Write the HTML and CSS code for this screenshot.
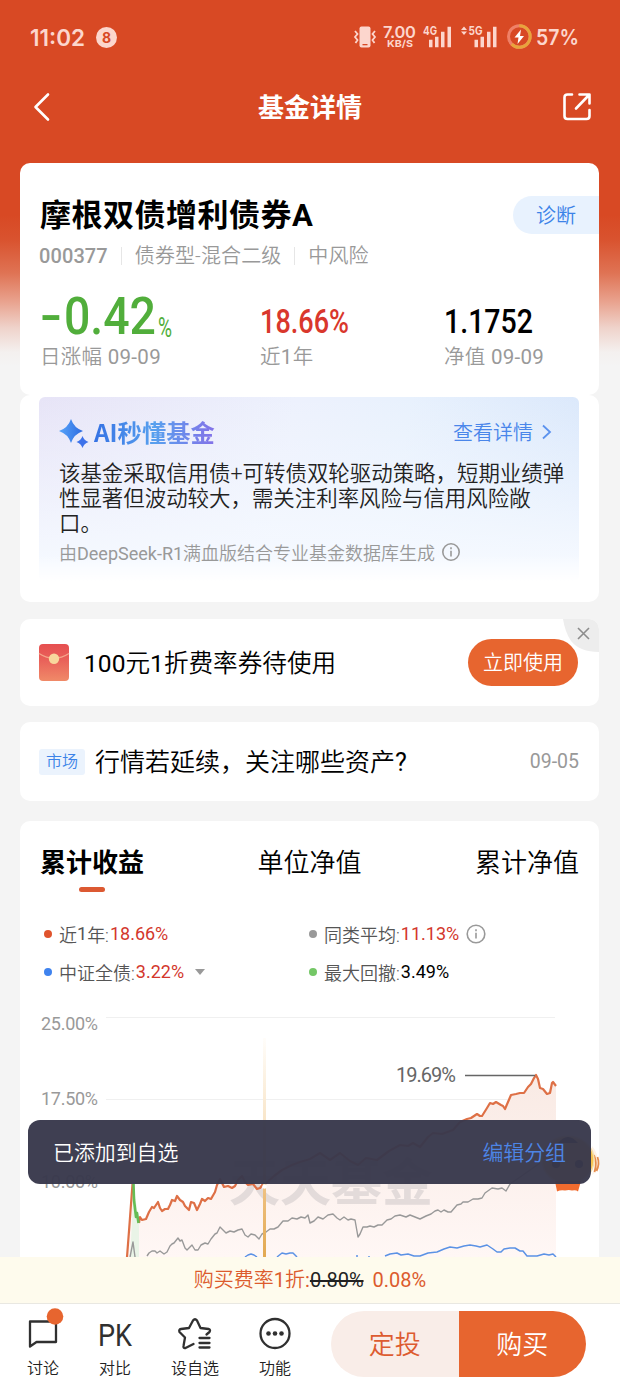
FILE: index.html
```html
<!DOCTYPE html>
<html lang="zh-CN">
<head>
<meta charset="utf-8">
<title>基金详情</title>
<link rel="stylesheet" href="styles.css">
</head>
<body>
<div class="screen">
  <header class="status">
    <span class="clock">11:02</span><span class="notice">8</span>
    <svg class="signals" width="236" height="36" viewBox="350 20 236 36">
      <g fill="#fcd6cd">
        <rect x="359.500" y="27.500" width="11" height="21" rx="2"/>
        <path d="M355 32l2.500 3-2.500 3 2.500 3-2 3M375 32l-2.500 3 2.500 3-2.500 3 2 3" fill="none" stroke="#fcd6cd" stroke-width="1.800"/>
        <rect x="362.500" y="45" width="5" height="1.300" fill="#d84924"/>
        <text x="383" y="38.500" font-size="16.500" font-weight="600" textLength="33">7.00</text>
        <text x="387" y="48" font-size="9.500" font-weight="700" textLength="26" lengthAdjust="spacingAndGlyphs">KB/S</text>
        <text x="423" y="36" font-size="12" font-weight="700" textLength="14" lengthAdjust="spacingAndGlyphs">4G</text>
        <text x="468.500" y="36" font-size="12" font-weight="700" textLength="14" lengthAdjust="spacingAndGlyphs">5G</text>
        <path transform="translate(0 .7)" d="M429 40h3.500v7.500h-3.500zM435 37h3.500v10.500h-3.500zM441 32h3.500v15.500h-3.500zM447.500 27h3.500v20.500h-3.500zM474.500 40h3.500v7.500h-3.500zM480.500 37h3.500v10.500h-3.500zM487 32h3.500v15.500h-3.500zM493 27h3.500v20.500h-3.500zM461 30.300l3-3.500 3 3.500zM461 31.800l3 3.500 3-3.500z"/>
        <text x="536" y="46" font-size="22" font-weight="600" textLength="43" lengthAdjust="spacingAndGlyphs">57%</text>
      </g>
      <circle cx="519.300" cy="37.500" r="10.800" fill="none" stroke="#ef8067" stroke-width="3"/>
      <path d="M519.300 26.700a10.800 10.800 0 1 1-7.600 18.400" fill="none" stroke="#e8a33c" stroke-width="3"/>
      <path d="M521 30.500l-6.500 8h4l-1 6.500 6.500-8h-4z" fill="#fff"/>
    </svg>
  </header>
  <nav class="nav">
    <svg width="30" height="36" viewBox="0 0 30 36"><path d="M20 5.500L7.500 18 20 30.500" class="white-line"/></svg>
    <h1>基金详情</h1>
    <svg width="30" height="36" viewBox="0 0 30 36"><path d="M10 5.500H5.500Q2.500 5.500 2.500 8.500v18.500q0 3 3 3h19q3 0 3-3v-6M14 19.500L27 6M17.500 5.500h10v9" class="white-line"/></svg>
  </nav>

  <section class="card fund">
    <div class="fund-head"><h2>摩根双债增利债券A</h2><a class="diagnose">诊断</a></div>
    <div class="meta"><b>000377</b><span>债券型-混合二级</span><span>中风险</span></div>
    <div class="stats">
      <div class="stat">
        <svg width="160" height="54" class="green"><text x="0" y="44" font-size="52" textLength="22" lengthAdjust="spacingAndGlyphs">-</text><text x="24" y="45" font-size="52" textLength="92" lengthAdjust="spacingAndGlyphs">0.42</text><text x="118" y="48" font-size="28" font-weight="400" textLength="14" lengthAdjust="spacingAndGlyphs">%</text></svg>
        <p>日涨幅 <i>09-09</i></p>
      </div>
      <div class="stat">
        <svg width="140" height="54" class="red"><text x="0" y="44" font-size="33" textLength="89" lengthAdjust="spacingAndGlyphs">18.66%</text></svg>
        <p>近<i>1</i>年</p>
      </div>
      <div class="stat">
        <svg width="140" height="54"><text x="0" y="44" font-size="33" textLength="89" lengthAdjust="spacingAndGlyphs">1.1752</text></svg>
        <p>净值 <i>09-09</i></p>
      </div>
    </div>
  </section>
  <section class="card insight">
    <div class="ai">
      <div class="ai-head">
        <svg width="32" height="32" viewBox="0 0 32 32">
          <defs><linearGradient id="spark" x2="1"><stop stop-color="#58a5fa"/><stop offset="1" stop-color="#2e6be0"/></linearGradient></defs>
          <path d="M12 3Q15 12 24 15Q15 18 12 27Q9 18 0 15Q9 12 12 3Z" fill="url(#spark)"/>
          <path d="M23.500 20Q25 24.500 29.500 26Q25 27.500 23.500 32Q22 27.500 17.500 26Q22 24.500 23.500 20Z" fill="#3d72ea"/>
        </svg>
        <strong>AI秒懂基金</strong>
        <a>查看详情</a>
        <svg width="12" height="18" viewBox="0 0 12 18"><path d="M2 2.500L9 9 2 15.500" fill="none" stroke="#5b92ee" stroke-width="1.800"/></svg>
      </div>
      <p class="summary">该基金采取信用债+可转债双轮驱动策略，短期业绩弹<br>性显著但波动较大，需关注利率风险与信用风险敞<br>口。</p>
      <p class="source"><span>由<i>DeepSeek-R1</i>满血版结合专业基金数据库生成</span><svg width="20" height="20" viewBox="0 0 20 20" class="info"><circle cx="10" cy="10" r="8.200"/><path d="M10 8.800V14.500M10 5.300V7.300"/></svg></p>
    </div>
  </section>

  <section class="card coupon">
    <svg width="30" height="37" viewBox="0 0 30 37">
      <defs><linearGradient id="env" x2="0" y2="1"><stop stop-color="#e64f50"/><stop offset=".45" stop-color="#e9625a"/><stop offset="1" stop-color="#f08a68"/></linearGradient></defs>
      <rect width="30" height="37" rx="4" fill="url(#env)"/><path d="M0 9.500Q15 19 30 9.500" fill="none" stroke="#f5a58b" stroke-width="1.300"/><circle cx="15" cy="14.800" r="5.200" fill="#f8d79c"/>
    </svg>
    <span><i>100</i>元<i>1</i>折费率券待使用</span>
    <button class="use">立即使用</button>
    <svg class="close" width="36" height="34" viewBox="0 0 36 34"><path d="M0 0h36v33Q17 33 8 22Q2 13 0 0z" fill="#ededed"/><path d="M15 9l11 11M26 9l-11 11" stroke="#8d8d8d" stroke-width="1.600"/></svg>
  </section>

  <section class="card news"><em>市场</em><span>行情若延续，关注哪些资产<i>?</i></span><time>09-05</time></section>

  <section class="card performance">
    <div class="tabs"><b>累计收益</b><span>单位净值</span><span>累计净值</span></div>
    <div class="legend">
      <div><i class="dot orange-dot"></i>近<i>1</i>年:<span class="up">18.66%</span></div>
      <div><i class="dot gray-dot"></i>同类平均:<span class="up">11.13%</span><svg width="20" height="20" viewBox="0 0 20 20" class="info"><circle cx="10" cy="10" r="8.800"/><path d="M10 8.800V14.500M10 5.300V7.300"/></svg></div>
      <div><i class="dot blue-dot"></i>中证全债:<span class="up">3.22%</span><svg width="10" height="6" class="caret"><path d="M0 0h10L5 6z" fill="#999"/></svg></div>
      <div><i class="dot green-dot"></i>最大回撤:<span class="plain">3.49%</span></div>
    </div>
    <svg class="chart" width="579" height="257" viewBox="20 1000 579 257">
      <defs>
        <linearGradient id="fill" x2="0" y2="1"><stop stop-color="#f9eae4"/><stop offset="1" stop-color="#fff7f5"/></linearGradient>
        <linearGradient id="marker" gradientUnits="userSpaceOnUse" x1="0" y1="1038" x2="0" y2="1257"><stop stop-color="#fffdfa"/><stop offset=".4" stop-color="#f8e4c6"/><stop offset=".65" stop-color="#f0c488"/><stop offset="1" stop-color="#e2a951"/></linearGradient>
      </defs>
      <path d="M106 1017.500H555M106 1099.500H555" stroke="#f0f0f0"/>
      <path d="M127 1257L133 1184L139 1223L146 1219L154 1207L158 1203L162 1211L177 1197L189 1210L197 1209L215 1192L220 1179L235 1186L242 1176L260 1188L282 1170L310 1160L358 1165L400 1145L433 1133L467 1119L477 1114L482 1116L490 1103L498 1102L505 1109L511 1095L523 1093L536 1075L540 1088L547 1094L553 1082L556 1086V1257Z" fill="url(#fill)"/>
      <path d="M130 1257L134 1188L139 1223V1257z" fill="#e9f4e7"/>
      <text class="watermark" x="229" y="1201" textLength="204">天天基金</text>
      <g class="axis"><text x="41" y="1030" textLength="57">25.00%</text><text x="41" y="1105" textLength="57">17.50%</text><text x="41" y="1188" textLength="57">10.00%</text></g>
      <path d="M130 1257L133 1242L135 1257M147 1256L149 1253L152 1251L155 1251L157 1253L160 1251L164 1254L167 1252L170 1246L172 1244L174 1243L178 1238L180 1241L182 1240L185 1248L187 1250L190 1247L192 1245L195 1250L198 1250L201 1245L205 1243L208 1244L211 1239L215 1234L217 1233L220 1227L223 1230L226 1233L230 1231L234 1232L238 1230L242 1229L245 1235L248 1237L251 1234L255 1235L259 1239L262 1234L266 1232L270 1229L274 1229L278 1227L283 1221L288 1221L292 1218L297 1219L301 1217L305 1218L308 1215L310 1223L314 1221L318 1217L323 1219L328 1215L333 1214L337 1218L340 1220L344 1217L348 1220L351 1219L355 1220L358 1237L360 1234L363 1227L367 1227L370 1226L374 1227L378 1225L382 1225L387 1220L391 1219L395 1216L400 1215L406 1217L410 1215L415 1217L420 1219L426 1216L431 1214L435 1211L438 1210L441 1212L444 1210L448 1212L451 1212L457 1205L461 1204L463 1202L468 1202L473 1199L478 1199L482 1198L485 1193L492 1188L498 1189L502 1188L506 1191L510 1184L523 1175L540 1163" class="line gray-line"/>
      <path d="M245 1257L248 1255L251 1254L254 1255L257 1257M277 1257L282 1253L286 1254L290 1253L293 1253L297 1257M357 1257v-2M369 1257v-1M385 1256L390 1254L397 1253L401 1255L408 1254L414 1256L420 1256L428 1253L437 1252L444 1249L450 1247L457 1248L464 1246L470 1245L476 1246L480 1247L487 1245L493 1249L497 1252L501 1252L504 1249L510 1248L515 1248L520 1251L523 1251L527 1256L531 1256L537 1256L544 1254L549 1255L553 1254L556 1257" class="line blue-line"/>
      <path d="M127 1257L129 1231L132.500 1184M139 1223L140 1217L142 1220L146 1219L149 1212L152 1207L154 1208L156 1205L158 1202L160 1208L162 1211L165 1209L168 1209L170 1205L172 1200L175 1201L177 1196L180 1200L183 1202L185 1206L189 1210L191 1202L194 1203L197 1210L200 1204L202 1199L205 1201L208 1198L211 1199L215 1192L217 1185L220 1179L222 1183L224 1187L228 1186L232 1188L235 1186L238 1180L242 1176L245 1182L248 1185L253 1184L257 1189L260 1188L263 1184L265 1184L274 1176L282 1170L292 1165L300 1162L310 1159L320 1153L330 1160L340 1153L350 1161L358 1165L366 1158L377 1160L389 1151L400 1145L408 1146L413 1143L420 1147L428 1137L433 1133L442 1134L453 1130L460 1122L467 1119L471 1118L477 1114L480 1116L482 1116L487 1108L490 1103L493 1104L496 1102L501 1105L503 1106L505 1109L508 1102L511 1095L516 1094L520 1093L524 1093L528 1087L531 1084L534 1078L536 1075L538 1079L540 1088L543 1089L547 1094L550 1093L552 1083L553 1082L556 1086" class="line orange-line"/>
      <path d="M133.500 1184L134 1200L136 1217L137 1213L138.500 1223" class="line green-line"/>
      <path d="M263 1038h3V1257h-3z" fill="url(#marker)"/>
      <circle cx="264.500" cy="1186.500" r="2.200" fill="#fff"/>
      <path d="M465 1075.500H535" stroke="#666" stroke-width="1.600"/>
      <text class="peak" x="396" y="1082" textLength="60">19.69%</text>
      <g class="mascot">
        <path d="M592 1146q9 10 4 26l-4 3q5-13-1-24z" fill="#fff3e6"/>
        <path d="M594 1155q3.500 8 .5 17M597.500 1157q2.500 7-1 14" fill="none" stroke="#e58c4c" stroke-width="1.800"/>
        <ellipse cx="568" cy="1160" rx="26" ry="24" fill="#f6c450" stroke="#f6e0aa" stroke-width="1.500"/>
        <path d="M555 1181l2 10.500q4-2 8-1 4-1 7 0 4-1 6 1l3-10.500z" fill="#f16b2e"/>
        <circle cx="556" cy="1164" r="4"/><circle cx="579" cy="1164" r="4"/><path d="M558 1143q10-12 20 0z"/>
      </g>
    </svg>
  </section>

  <div class="toast"><span>已添加到自选</span><a>编辑分组</a></div>
  <footer class="bottom">
    <p class="fee">购买费率<i>1</i>折<i>:</i><del>0.80%</del><span>0.08%</span></p>
    <div class="actions">
      <div class="action"><svg width="40" height="40" viewBox="0 0 40 40"><path d="M7 10.500h26v20.500H13.500L7 35.500z" class="black-line"/><circle cx="32" cy="5.500" r="8.300" fill="#e7652f"/></svg><span>讨论</span></div>
      <div class="action"><svg width="40" height="40" viewBox="0 0 40 40"><text x="3" y="34.500" font-size="32" textLength="34" lengthAdjust="spacingAndGlyphs">PK</text></svg><span>对比</span></div>
      <div class="action wide"><svg width="40" height="40" viewBox="0 0 40 40"><path d="M18.500 33L10.500 37Q8 37.500 8.500 35L10 26.500 4.500 21Q3.500 18.500 6 18L14 17 18 9.500Q20 7 22 9.500L25.500 17 33.500 18Q36 18.500 34.500 21L31.500 23.500M24.500 27h10M24.500 32h10M24.500 36.500h10" class="black-line"/></svg><span>设自选</span></div>
      <div class="action"><svg width="40" height="40" viewBox="0 0 40 40"><circle cx="20" cy="22.500" r="14.500" class="black-line"/><g fill="#303030"><circle cx="13.500" cy="22.500" r="2.300"/><circle cx="20" cy="22.500" r="2.300"/><circle cx="26.500" cy="22.500" r="2.300"/></g></svg><span>功能</span></div>
      <div class="trade"><a class="invest">定投</a><a class="buy">购买</a></div>
    </div>
  </footer>
</div>
</body>
</html>
```
FILE: styles.css
```css
* { box-sizing: border-box; margin: 0; padding: 0; }
body { width: 620px; height: 1386px; overflow: hidden; font-family: Roboto, "Noto Sans CJK SC", sans-serif; font-weight: 350; color: #000; }
.screen { position: relative; width: 620px; height: 1386px; overflow: hidden; background: linear-gradient(#d84924 0, #d84924 215px, #d9532f 240px, #df7354 273px, #e9a38f 302px, #efd3cb 328px, #f4f0ef 352px, #f4f4f4 366px); }
svg { display: block; flex: none; overflow: visible; }
a { text-decoration: none; }
/* Latin runs sit one step heavier than the CJK text around them */
i { font-style: normal; font-weight: 400; }

.status { display: flex; align-items: center; height: 74px; padding: 0 34px 0 30px; color: #fcd6cd; }
.clock { font: 600 22.5px Inter, sans-serif; width: 66px; }
.notice { width: 21px; height: 21px; border-radius: 50%; background: #fcd6cd; color: #d84924; font: 700 14px/21px Inter, sans-serif; text-align: center; }
.signals { margin-left: auto; font-family: Inter, sans-serif; }
.nav { display: flex; align-items: center; justify-content: space-between; height: 66px; padding: 0 28px; color: #fff; }
.nav h1 { font-size: 26px; font-weight: 700; padding-bottom: 4px; }
.white-line { fill: none; stroke: #fff; stroke-width: 2.6; stroke-linecap: round; stroke-linejoin: round; }

.card { margin: 0 21px 0 20px; background: #fff; border-radius: 10px; width: 579px; }
.fund { height: 232px; margin-top: 23px; padding: 30px 0 0 20px; }
.fund-head { display: flex; justify-content: space-between; align-items: center; height: 44px; }
.fund-head h2 { font-size: 31px; font-weight: 700; letter-spacing: .5px; padding-bottom: 6px; }
.diagnose { width: 86px; height: 38px; border-radius: 19px 0 0 19px; background: #e8f2fe; color: #3c83e8; font-size: 20px; line-height: 40px; text-align: center; }
.meta { display: flex; align-items: center; height: 38px; color: #999; font-size: 20px; letter-spacing: .1px; }
.meta b { font-size: 20px; font-weight: 500; margin-left: -1px; }
.meta span { border-left: 1px solid #e6e6e6; line-height: 18px; margin-left: 13px; padding-left: 13px; }
.stats { display: grid; grid-template-columns: 220px 184px 1fr; padding-top: 14px; }
.stat svg { font-weight: 470; }
.stat p { color: #999; font-size: 20.5px; line-height: 24px; margin-top: 2px; letter-spacing: .3px; }
.green { fill: #51ae3b; }
.red { fill: #d9372c; }

.insight { height: 207px; padding: 2px 20px 0 19px; }
.ai { height: 184px; padding: 18px 0 0 20px; border-radius: 6px; background: linear-gradient(transparent 86%, #fff), linear-gradient(#fff0, #f5f9ff 90%), linear-gradient(100deg, #e7e4f7 0, #edf1fd 45%, #e8f1fd 65%, #d9e7fb 100%); }
.ai-head { display: flex; align-items: center; height: 33px; }
.ai-head strong { margin: 0 auto 0 3px; font-family: "Noto Sans CJK SC", sans-serif; font-size: 24.3px; line-height: 32px; font-weight: 700; background: linear-gradient(90deg, #3572e4, #58a0ee 50%, #8472e8); -webkit-background-clip: text; color: transparent; }
.ai-head a { color: #4a86ea; font-size: 20px; margin-right: 8px; }
.ai-head > svg:last-child { margin-right: 26px; }
.summary { margin-top: 13px; color: #222; font-size: 21.45px; line-height: 25px; white-space: nowrap; }
.source { display: flex; align-items: center; gap: 6px; margin-top: 3px; height: 25px; color: #999; font-size: 18px; white-space: nowrap; }
.info { fill: none; stroke: #999; stroke-width: 1.6; }

.coupon { position: relative; display: flex; align-items: center; height: 87px; margin-top: 17px; padding: 0 21px 0 19px; }
.coupon span { margin-left: 15px; font-size: 24.6px; padding-bottom: 3px; }
.use { width: 110px; height: 47px; margin-left: auto; padding-bottom: 2px; border: 0; border-radius: 24px; background: #e7652f; color: #fff; font: inherit; font-size: 20px; }
.close { position: absolute; right: 0; top: 0; border-top-right-radius: 10px; overflow: hidden; }
.news { display: flex; align-items: center; height: 79px; margin-top: 16px; padding: 0 20px 0 19px; }
.news em { width: 46px; height: 26px; border-radius: 3px; background: #ebf3fd; color: #3c83e8; font-style: normal; font-size: 16px; line-height: 25px; text-align: center; }
.news span { margin-left: 10px; font-size: 25px; padding-bottom: 4px; }
.news time { margin-left: auto; color: #999; font-size: 19.5px; font-weight: 400; }

.performance { height: 480px; margin-top: 20px; }
.tabs { display: flex; justify-content: space-between; height: 94px; padding: 23px 20px 0; font-size: 26px; line-height: 38px; }
.tabs b { height: 48px; position: relative; }
.tabs b::after { content: ""; position: absolute; left: 39px; bottom: 0; width: 26px; height: 5px; border-radius: 2.5px; background: #dc5932; }
.legend { display: grid; grid-template-columns: 265px 1fr; grid-auto-rows: 38px; height: 85px; padding-left: 24px; color: #555; font-size: 18px; }
.legend div { display: flex; align-items: center; height: 37px; }
.dot { width: 8px; height: 8px; margin-right: 7px; border-radius: 50%; }
.orange-dot { background: #e0542d; }
.gray-dot { background: #999; }
.blue-dot { background: #3f83ee; }
.green-dot { background: #74c766; }
.up, .plain { margin-left: 1px; color: #d3372c; font-weight: 400; }
.plain { color: #000; }
.legend .info { margin-left: 7px; }
.caret { margin-left: 11px; }
.axis { fill: #999; font-size: 18px; font-weight: 400; }
.peak { fill: #666; font-size: 20px; font-weight: 400; }
.watermark { fill: #e3dbda; font-size: 51px; font-weight: 700; }
.line { fill: none; stroke-linejoin: round; }
.orange-line { stroke: #de7046; stroke-width: 2.2; }
.gray-line { stroke: #999; stroke-width: 1.4; }
.blue-line { stroke: #5b92e5; stroke-width: 1.5; }
.green-line { stroke: #66bd55; stroke-width: 2.6; }

.toast { position: absolute; left: 28px; top: 1120px; width: 563px; height: 64px; display: flex; align-items: center; justify-content: space-between; padding: 0 25px 2px; border-radius: 12px; background: rgba(57, 57, 76, .97); color: #fff; font-size: 20.9px; }
.toast a { color: #4d85e6; }
.bottom { position: absolute; left: 0; top: 1257px; width: 620px; height: 129px; background: #fff; }
.fee { height: 47px; background: #fefbed; border-bottom: 1px solid #e9e8e2; color: #dc5b2d; text-align: center; font-size: 20px; line-height: 47px; }
.fee del { color: #222; font-weight: 400; text-decoration-thickness: 1.5px; }
.fee span { margin-left: 9px; font-weight: 400; }
.actions { display: flex; height: 82px; padding: 7px 0 0 7px; }
.action { width: 72px; display: flex; flex-direction: column; align-items: center; color: #222; font-size: 16px; line-height: 24px; gap: 6px; }
.action svg { fill: #303030; font-weight: 400; }
.wide { width: 88px; }
.black-line { fill: none; stroke: #303030; stroke-width: 2.3; stroke-linejoin: round; stroke-linecap: round; }
.trade { display: flex; width: 255px; height: 66px; margin-left: 20px; border-radius: 33px; overflow: hidden; font-size: 26px; line-height: 68px; text-align: center; }
.invest { flex: 1; background: #f9ede8; color: #dd5b30; }
.buy { flex: 1; background: #e7652f; color: #fff; }
```
